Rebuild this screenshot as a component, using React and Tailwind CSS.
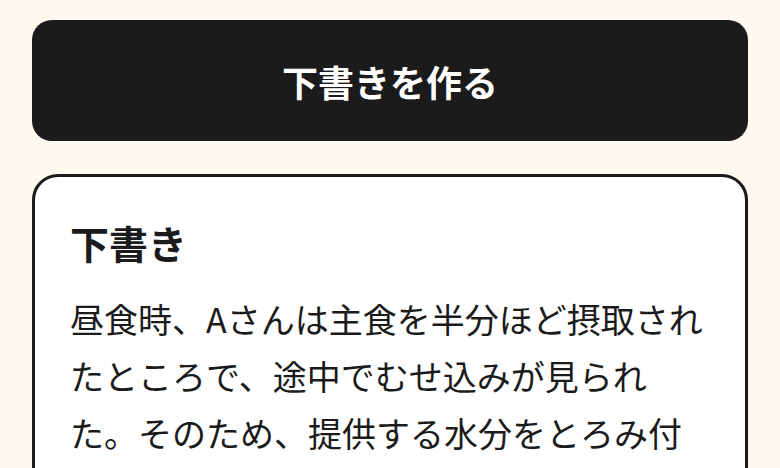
export default function App() {
  const font = {
    fontFamily: '"Noto Sans CJK JP", "Noto Sans", sans-serif',
  };

  return (
    <div
      className="min-h-screen bg-[#fdf9ee] px-8 pt-5 pb-10 text-[#1b1b1b]"
      style={font}
    >
      <button
        type="button"
        className="flex h-[121px] w-full items-center justify-center rounded-[20px] bg-[#1b1b1b] text-[36px] font-bold text-white"
      >
        下書きを作る
      </button>

      <div className="mt-[33px] rounded-[26px] border-[3px] border-[#1b1b1b] bg-white px-[35px] pt-[40px] pb-10">
        <h2 className="text-[39px] font-bold leading-[50px]">下書き</h2>
        <p className="mt-[23px] text-[34px] leading-[57px]">
          昼食時、Aさんは主食を半分ほど摂取されたところで、途中でむせ込みが見られた。そのため、提供する水分をとろみ付きに変更し、食事時の姿勢を調整した。
        </p>
      </div>
    </div>
  );
}
